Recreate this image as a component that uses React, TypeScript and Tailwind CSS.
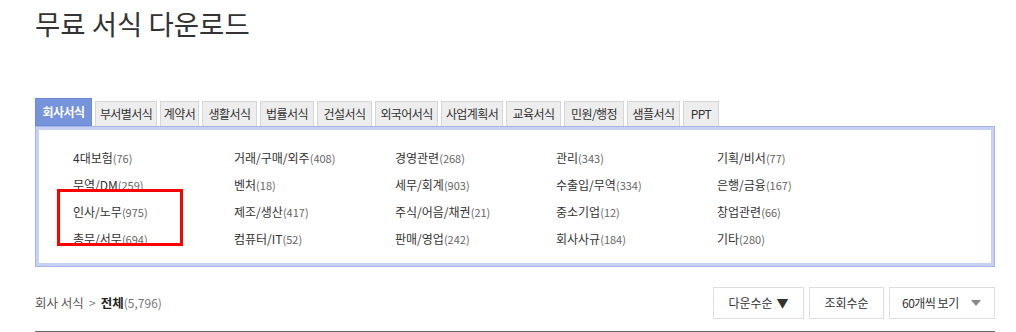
import React from "react";

const tabs: [string, number][] = [["회사서식",57],["부서별서식",62],["계약서",39],["생활서식",55],["법률서식",54],["건설서식",55],["외국어서식",63],["사업계획서",62],["교육서식",55],["민원/행정",60],["샘플서식",53],["PPT",36]];

const rows: [string, string][][] = [
  [["4대보험","76"],["거래/구매/외주","408"],["경영관련","268"],["관리","343"],["기획/비서","77"]],
  [["무역/DM","259"],["벤처","18"],["세무/회계","903"],["수출입/무역","334"],["은행/금융","167"]],
  [["인사/노무","975"],["제조/생산","417"],["주식/어음/채권","21"],["중소기업","12"],["창업관련","66"]],
  [["총무/서무","694"],["컴퓨터/IT","52"],["판매/영업","242"],["회사사규","184"],["기타","280"]],
];

export default function App() {
  return (
    <div className="w-[1016px] h-[332px] overflow-hidden bg-white text-[#333]" style={{ fontFamily: '"Noto Sans CJK KR", "Noto Sans", sans-serif' }}>
      <div className="pl-[35px] w-[995px]">
        <h1 className="text-[27.5px] leading-[28px] pt-[9px] font-normal text-[#333]">무료 서식 다운로드</h1>
        <div className="flex items-end gap-[3px] mt-[61px] h-[28px]">
          {tabs.map(([t, w], i) =>
            i === 0 ? (
              <div key={t} style={{ width: w }} className="h-[28px] flex items-center justify-center bg-[#7694dc] border border-[#6c8ad6] text-white text-[12px] font-bold tracking-[-0.6px] whitespace-nowrap">{t}</div>
            ) : (
              <div key={t} style={{ width: w }} className="h-[25px] flex items-center justify-center bg-[#ededed] border border-[#d6d6d6] border-b-0 text-[#333] text-[12px] tracking-[-0.6px] whitespace-nowrap">{t}</div>
            )
          )}
        </div>
        <div className="relative border border-[#a6b5e4] h-[141px]">
          <div className="border-[3px] border-[#c6d1f3] h-full pt-[14px] pl-[34px]">
            {rows.map((r, ri) => (
              <div key={ri} className="flex h-[27px] items-center">
                {r.map(([n, c]) => (
                  <div key={n} className="w-[161px] text-[12px] text-[#333] whitespace-nowrap">
                    {n}<span className="text-[11px] text-[#666]">({c})</span>
                  </div>
                ))}
              </div>
            ))}
          </div>
          <div className="absolute left-[21px] top-[62px] w-[126px] h-[57px] border-[3px] border-[#ff0000]" />
        </div>
        <div className="flex items-center justify-between mt-[20px] h-[32px]">
          <div className="text-[12.5px] text-[#555] flex items-center">
            <span>회사 서식</span>
            <span className="text-[#888] mx-[5px]">&gt;</span>
            <span className="font-bold text-[#222]">전체</span>
            <span className="text-[12px] text-[#777]">(5,796)</span>
          </div>
          <div className="flex gap-[5px]">
            <div className="w-[91px] h-[32px] border border-[#ddd] flex items-center justify-center text-[12px] text-[#333]">다운수순<span className="ml-[4px] text-[12px]">▼</span></div>
            <div className="w-[75px] h-[32px] border border-[#ddd] flex items-center justify-center text-[12px] text-[#333]">조회수순</div>
            <div className="w-[106px] h-[32px] border border-[#ddd] flex items-center justify-between pl-[12px] pr-[13px] text-[12px] text-[#333] tracking-[-0.5px]">
              <span>60개씩 보기</span>
              <svg width="10" height="6" viewBox="0 0 10 6"><path d="M0 0h10L5 6z" fill="#888" /></svg>
            </div>
          </div>
        </div>
        <div className="mt-[12px] h-[2px] bg-[#666]" />
      </div>
    </div>
  );
}
